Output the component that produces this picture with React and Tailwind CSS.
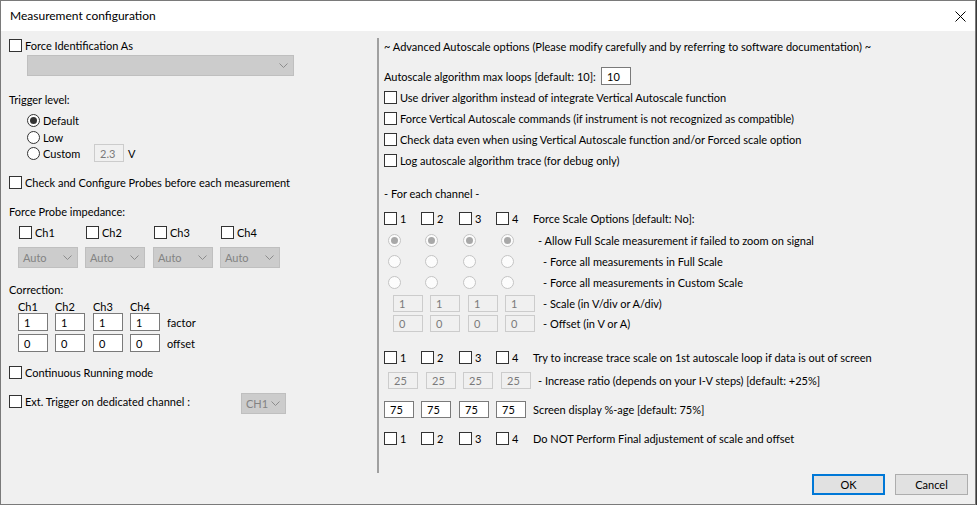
import React from 'react';

const font = "font-['Lato','Liberation_Sans',sans-serif] text-[11px]";

function Check({ label, className = '' }) {
  return (
    <div className={`flex h-[14px] items-center ${className}`}>
      <span className="h-[13px] w-[13px] shrink-0 border border-[#333333] bg-white" />
      {label && <span className="ml-[3px] whitespace-nowrap leading-none">{label}</span>}
    </div>
  );
}

function Radio({ label, checked, disabled, className = '' }) {
  return (
    <div className={`flex h-[14px] items-center ${className}`}>
      <span
        className={`flex h-[13px] w-[13px] shrink-0 items-center justify-center rounded-full border ${
          disabled ? 'border-[#c4c4c4] bg-[#fcfcfc]' : 'border-[#333333] bg-white'
        }`}
      >
        {checked && (
          <span className={`h-[7px] w-[7px] rounded-full ${disabled ? 'bg-[#a8a8a8]' : 'bg-[#333333]'}`} />
        )}
      </span>
      {label && <span className="ml-[3px] whitespace-nowrap leading-none">{label}</span>}
    </div>
  );
}

function Field({ value, disabled, w = 'w-[30px]', h = 'h-[18px]' }) {
  return (
    <div
      className={`flex ${w} ${h} shrink-0 items-center border pl-[5px] leading-none ${
        disabled ? 'border-[#cccccc] bg-[#f0f0f0] text-[#7a7a7a]' : 'border-[#7a7a7a] bg-white text-black'
      }`}
    >
      {value}
    </div>
  );
}

function Chevron() {
  return (
    <svg width="9" height="5" viewBox="0 0 9 5" className="shrink-0">
      <path d="M0.5 0.5 L4.5 4.5 L8.5 0.5" fill="none" stroke="#8c8c8c" strokeWidth="1" />
    </svg>
  );
}

function Combo({ value, w }) {
  return (
    <div
      className={`flex h-[21px] ${w} shrink-0 items-center justify-between border border-[#bfbfbf] bg-[#cccccc] pl-[4px] pr-[5px] leading-none text-[#838383]`}
    >
      <span>{value}</span>
      <Chevron />
    </div>
  );
}

function FourChecks() {
  return (
    <>
      <div className="w-[37px]"><Check label="1" /></div>
      <div className="w-[38px]"><Check label="2" /></div>
      <div className="w-[37px]"><Check label="3" /></div>
      <div className="w-[37px]"><Check label="4" /></div>
    </>
  );
}

function LeftColumn() {
  const chans = ['Ch1', 'Ch2', 'Ch3', 'Ch4'];
  const cols = ['w-[67px]', 'w-[68px]', 'w-[67px]', 'w-[67px]'];
  const corr = ['w-[37px]', 'w-[38px]', 'w-[37px]', 'w-[37px]'];
  return (
    <div className="flex w-[376px] shrink-0 flex-col pl-[8px]">
      <Check label="Force Identification As" className="mt-[7px]" />
      <div className="ml-[18px] mt-[3px]">
        <Combo value="" w="w-[267px]" />
      </div>

      <div className="mt-[16px] flex h-[14px] items-center leading-none">Trigger level:</div>
      <Radio label="Default" checked className="ml-[18px] mt-[7px]" />
      <Radio label="Low" className="ml-[18px] mt-[3px]" />
      <div className="ml-[18px] flex h-[18px] items-center">
        <div className="w-[67px]"><Radio label="Custom" /></div>
        <Field value="2.3" disabled />
        <span className="ml-[4px] leading-none">V</span>
      </div>

      <Check label="Check and Configure Probes before each measurement" className="mt-[13px]" />

      <div className="mt-[15px] flex h-[14px] items-center leading-none">Force Probe impedance:</div>
      <div className="ml-[10px] mt-[7px] flex">
        {chans.map((c, i) => (
          <div key={c} className={cols[i]}><Check label={c} /></div>
        ))}
      </div>
      <div className="ml-[9px] mt-[8px] flex">
        {chans.map((c, i) => (
          <div key={c} className={cols[i]}><Combo value="Auto" w="w-[60px]" /></div>
        ))}
      </div>

      <div className="mt-[14px] flex h-[14px] items-center leading-none">Correction:</div>
      <div className="ml-[9px] mt-[3px] flex h-[14px] items-center leading-none">
        {chans.map((c, i) => (
          <div key={c} className={corr[i]}>{c}</div>
        ))}
      </div>
      <div className="ml-[9px] flex items-center">
        {['1', '1', '1', '1'].map((v, i) => (
          <div key={i} className={corr[i]}><Field value={v} /></div>
        ))}
        <span className="leading-none">factor</span>
      </div>
      <div className="ml-[9px] mt-[3px] flex items-center">
        {['0', '0', '0', '0'].map((v, i) => (
          <div key={i} className={corr[i]}><Field value={v} /></div>
        ))}
        <span className="leading-none">offset</span>
      </div>

      <Check label="Continuous Running mode" className="mt-[13px]" />

      <div className="mt-[14px] flex h-[21px] items-start">
        <div className="mt-[1px] w-[232px]"><Check label="Ext. Trigger on dedicated channel :" /></div>
        <Combo value="CH1" w="w-[45px]" />
      </div>
    </div>
  );
}

function RightColumn() {
  const radioCols = ['w-[37px]', 'w-[38px]', 'w-[38px]', 'w-[37px]'];
  return (
    <div className="flex flex-1 flex-col pl-[5px]">
      <div className="mt-[8px] flex h-[14px] items-center whitespace-nowrap leading-none">
        ~ Advanced Autoscale options (Please modify carefully and by referring to software documentation) ~
      </div>
      <div className="mt-[14px] flex h-[18px] items-center">
        <span className="w-[217px] whitespace-nowrap leading-none">Autoscale algorithm max loops [default: 10]:</span>
        <Field value="10" />
      </div>
      <Check label="Use driver algorithm instead of integrate Vertical Autoscale function" className="mt-[5px]" />
      <Check label="Force Vertical Autoscale commands (if instrument is not recognized as compatible)" className="mt-[7px]" />
      <Check label="Check data even when using Vertical Autoscale function and/or Forced scale option" className="mt-[7px]" />
      <Check label="Log autoscale algorithm trace (for debug only)" className="mt-[7px]" />

      <div className="mt-[19px] flex h-[14px] items-center leading-none">- For each channel -</div>
      <div className="mt-[11px] flex h-[14px] items-center">
        <FourChecks />
        <span className="whitespace-nowrap leading-none">Force Scale Options [default: No]:</span>
      </div>

      {[
        { text: '- Allow Full Scale measurement if failed to zoom on signal', checked: true, pad: '' },
        { text: '- Force all measurements in Full Scale', checked: false, pad: 'pl-[5px]' },
        { text: '- Force all measurements in Custom Scale', checked: false, pad: 'pl-[5px]' },
      ].map((r, idx) => (
        <div key={idx} className={`ml-[4px] flex h-[14px] items-center ${idx === 0 ? 'mt-[8px]' : 'mt-[7px]'}`}>
          {radioCols.map((c, i) => (
            <div key={i} className={c}><Radio checked={r.checked} disabled /></div>
          ))}
          <span className={`whitespace-nowrap leading-none ${r.pad}`}>{r.text}</span>
        </div>
      ))}

      <div className="ml-[9px] mt-[6px] flex items-center">
        {['w-[37px]', 'w-[38px]', 'w-[37px]', 'w-[38px]'].map((c, i) => (
          <div key={i} className={c}><Field value="1" disabled h="h-[17px]" /></div>
        ))}
        <span className="whitespace-nowrap leading-none">- Scale (in V/div or A/div)</span>
      </div>
      <div className="ml-[9px] mt-[3px] flex items-center">
        {['w-[37px]', 'w-[38px]', 'w-[37px]', 'w-[38px]'].map((c, i) => (
          <div key={i} className={c}><Field value="0" disabled h="h-[17px]" /></div>
        ))}
        <span className="whitespace-nowrap leading-none">- Offset (in V or A)</span>
      </div>

      <div className="mt-[18px] flex h-[14px] items-center">
        <FourChecks />
        <span className="whitespace-nowrap leading-none">
          Try to increase trace scale on 1st autoscale loop if data is out of screen
        </span>
      </div>
      <div className="ml-[4px] mt-[8px] flex items-center">
        {['w-[38px]', 'w-[37px]', 'w-[38px]', 'w-[37px]'].map((c, i) => (
          <div key={i} className={c}><Field value="25" disabled h="h-[17px]" /></div>
        ))}
        <span className="whitespace-nowrap leading-none">- Increase ratio (depends on your I-V steps) [default: +25%]</span>
      </div>
      <div className="mt-[12px] flex items-center">
        {['w-[37px]', 'w-[38px]', 'w-[37px]', 'w-[37px]'].map((c, i) => (
          <div key={i} className={c}><Field value="75" h="h-[17px]" /></div>
        ))}
        <span className="whitespace-nowrap leading-none">Screen display %-age [default: 75%]</span>
      </div>
      <div className="mt-[13px] flex h-[14px] items-center">
        <FourChecks />
        <span className="whitespace-nowrap leading-none">Do NOT Perform Final adjustement of scale and offset</span>
      </div>
    </div>
  );
}

export default function App() {
  return (
    <div className="h-[505px] w-[977px] bg-[#3a3a3a]">
      <div className={`flex h-[505px] w-[976px] flex-col border border-[#7a7a7a] bg-[#f0f0f0] text-black ${font}`}>
        <div className="flex h-[30px] shrink-0 items-center justify-between bg-white pl-[9px] pr-[9px]">
          <span className="text-[12px] leading-none">Measurement configuration</span>
          <svg width="11" height="11" viewBox="0 0 11 11">
            <path d="M0.5 0.5 L10.5 10.5 M10.5 0.5 L0.5 10.5" stroke="#000" strokeWidth="1" />
          </svg>
        </div>
        <div className="flex h-[442px] shrink-0">
          <LeftColumn />
          <div className="mt-[7px] h-[435px] w-[2px] shrink-0 bg-[#a0a0a0]" />
          <RightColumn />
        </div>
        <div className="mt-[1px] flex justify-end gap-[10px] pr-[7px]">
          <button className="h-[21px] w-[73px] border-2 border-[#0078d7] bg-[#e1e1e1] leading-none">OK</button>
          <button className="h-[21px] w-[73px] border border-[#adadad] bg-[#e1e1e1] leading-none">Cancel</button>
        </div>
      </div>
    </div>
  );
}
